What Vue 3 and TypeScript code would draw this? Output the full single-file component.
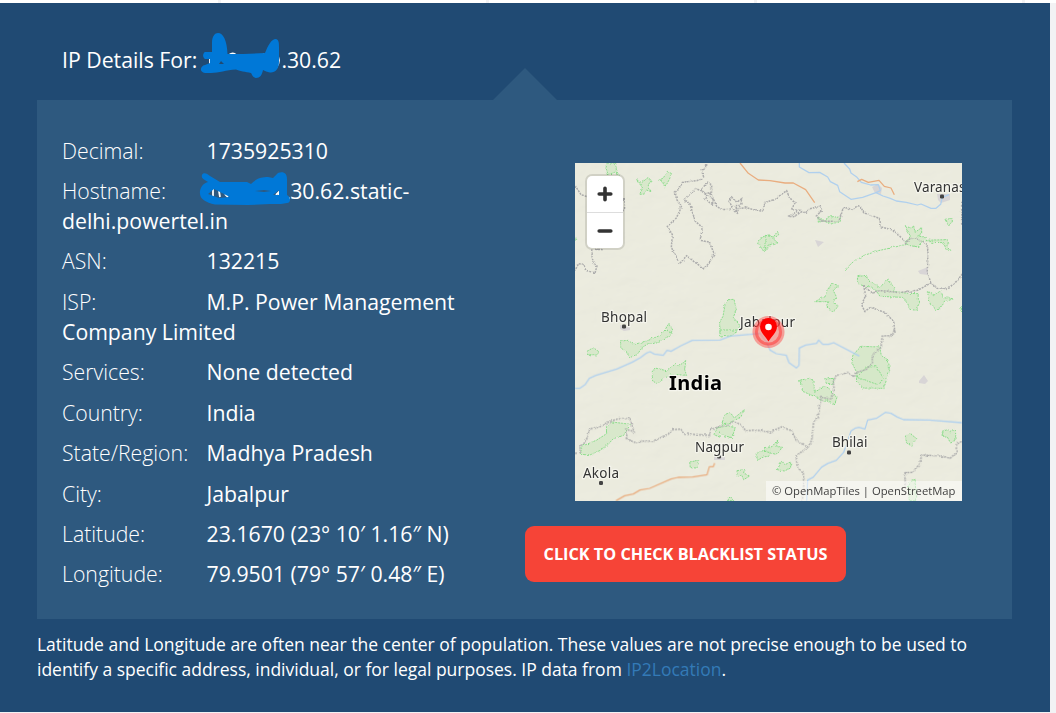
<script setup lang="ts">
interface Detail {
  label: string
  value: string
  masked?: boolean
}

const details: Detail[] = [
  { label: 'Decimal:', value: '1735925310' },
  { label: 'Hostname:', value: '30.62.static-delhi.powertel.in', masked: true },
  { label: 'ASN:', value: '132215' },
  { label: 'ISP:', value: 'M.P. Power Management Company Limited' },
  { label: 'Services:', value: 'None detected' },
  { label: 'Country:', value: 'India' },
  { label: 'State/Region:', value: 'Madhya Pradesh' },
  { label: 'City:', value: 'Jabalpur' },
  { label: 'Latitude:', value: '23.1670 (23° 10′ 1.16″ N)' },
  { label: 'Longitude:', value: '79.9501 (79° 57′ 0.48″ E)' },
]

interface Place {
  name: string
  x: number
  y: number
  w: number
  dotX?: number
  dotY?: number
}

const places: Place[] = [
  { name: 'Varanasi', x: 914, y: 191.5, w: 55, dotX: 942, dotY: 196.5 },
  { name: 'Bhopal', x: 601, y: 321.5, w: 46, dotX: 624, dotY: 326.5 },
  { name: 'Jabalpur', x: 740, y: 326.5, w: 55 },
  { name: 'Nagpur', x: 695, y: 451.5, w: 49, dotX: 719, dotY: 456.5 },
  { name: 'Bhilai', x: 832, y: 447, w: 35.5, dotX: 849, dotY: 452.5 },
  { name: 'Akola', x: 583, y: 478, w: 36, dotX: 601, dotY: 483 },
]
</script>

<template>
  <main class="page">
    <div class="topline"><i></i><i></i><i></i><i></i></div>
    <section class="band">
      <h1 class="title">
        <span>IP Details For:</span>
        <span class="title-gap">
          <svg class="scribble scribble-title" viewBox="200 32 84 48" width="84" height="48">
            <g fill="none" stroke="#fff" stroke-width="1.8">
              <path d="M207 58l3-2v9M229 55q4-3 7 0M258 55v5M262 56q3-4 6 0M276 53q6 7 0 15" />
            </g>
            <path
              fill="#0078d7"
              fill-rule="evenodd"
              d="M205 52H212V43C212 36 215 33 218 33C223 33 227 40 227.5 54L243 54L265 53C268 46 271 39 276 39C279 40 279 43 279 47V62C279 69 275 73 270 72.5C267 72 265 71 263 70C262 75 260 78 256 78C252 77 252 74 251 73C246 72 239 71 236 69.5C226 70 219 73 211 73H205C199 72 200 66 205 65L210 63V59H205C202 57 203 53 205 52ZM219 64L221 61L224 64Z"
            />
          </svg>
        </span>
        <span>.30.62</span>
      </h1>

      <div class="panel">
        <ul class="details">
          <li v-for="item in details" :key="item.label">
            <span class="label">{{ item.label }}</span>
            <span v-if="item.masked" class="host-gap">
              <svg class="scribble scribble-host" viewBox="198 169 94 38" width="94" height="38">
                <path fill="none" stroke="#fff" stroke-width="1.8" d="M213 187v9M219 190l1 6M225 193l3 3M276 194l3-3v4M288.5 197.5h1.5" />
                <path
                  fill="#0078d7"
                  fill-rule="evenodd"
                  d="M202 174C203 171 207 172 210 175L220 181H247L251 183C257 177 262 176 268 176L273 177L278 172C284 170 287 173 287 178V194C291 196 291 202 287 202L281 203H270L248 204L215 203.5C205 201 199 198 200 190C201 185 204 182 208 181C203 178 201 177 202 174ZM208 193L214 188L230 196L219 197ZM255 190L264 189L271 190L264 191ZM273 194L279 189V194Z"
                />
              </svg>
            </span>
            <span class="value">{{ item.value }}</span>
          </li>
        </ul>

        <div class="side">
          <div class="map">
            <svg class="map-canvas" viewBox="575 163 387 338" width="387" height="338">
              <defs>
                <filter id="relief" x="0" y="0" width="100%" height="100%">
                  <feTurbulence type="fractalNoise" baseFrequency="0.018 0.03" numOctaves="4" seed="8" result="n" />
                  <feDiffuseLighting in="n" surfaceScale="3.2" diffuseConstant="1" lighting-color="#ffffff">
                    <feDistantLight azimuth="225" elevation="60" />
                  </feDiffuseLighting>
                </filter>
                <filter id="rough" x="-5%" y="-5%" width="110%" height="110%">
                  <feTurbulence type="fractalNoise" baseFrequency="0.22" numOctaves="2" seed="3" />
                  <feDisplacementMap in="SourceGraphic" scale="3" xChannelSelector="R" yChannelSelector="G" />
                </filter>
              </defs>
              <rect x="575" y="163" width="387" height="338" fill="#ebebdd" />
              <rect x="575" y="163" width="387" height="338" filter="url(#relief)" opacity="0.09" />

              <g class="towns">
                <path d="M872 187l6-3 4 4-1 6-6-1zM937 194h13v6l-9 3-3-3zM918 271l10-4v8l-8-1zM815 240l9 2-6 5zM919 381l5-6 4 6-3 3-6-1zM714 455h11v5h-11zM620 325l10 2v3l-6 1-4-2z" />
              </g>

              <g class="green" filter="url(#rough)">
                <g transform="translate(570 158) scale(.33333)">
                  <path d="M113 15L108 28L114 50L134 43L148 52L139 39L137 15ZM200 65L215 74L235 58L243 72L231 81L244 101L229 96L223 108L209 109L218 90ZM292 40L305 47L298 64L285 88L278 72L266 67L280 60ZM600 231L583 234L562 251L571 266L582 281L600 267ZM475 425L492 424L499 455L490 478L510 503L497 525H450L449 492L459 475L466 435ZM287 512L297 496L308 516L302 525ZM15 234L20 244L15 248Z" />
                </g>
                <g transform="translate(765 158) scale(.33333)">
                  <path d="M159 177L177 187L195 176L226 178V190L201 198L175 189L160 193ZM0 232L25 237L38 220L41 230L25 243L40 255L11 260L0 275ZM540 184L560 182L562 192L550 201ZM421 203L435 210L446 204L450 223L470 209V225L458 234L484 238L460 267L430 262L423 253L436 235ZM481 247L545 245L551 256L546 263L557 277L544 276L536 254L500 253ZM278 356L303 352L314 369L345 389L368 361L389 392L385 400L426 406L459 407L461 443L455 457L434 454L426 430L412 418L345 415L332 396L310 386L287 381L277 370ZM487 401L505 410L529 399L534 419L566 422L540 431L523 453L514 457L497 442L493 426ZM201 377L220 382L205 398L214 416L208 433L219 446L205 460L184 446L189 431L151 431L180 413L186 397ZM590 446L582 453L590 461Z" />
                  <path class="green-line" d="M240 335L264 312L298 292L340 278L386 268L426 259" />
                </g>
                <g transform="translate(570 330) scale(.33333)">
                  <path d="M152 33L175 31L191 44L235 31L269 17L285 0L305 5L300 17L264 35L236 40L217 52L202 73L177 84L170 67L152 53ZM450 0L505 0L486 17L451 21ZM51 64L70 53L88 66L80 75L58 74ZM246 126L255 114L289 122L314 101L324 111L347 91L344 119L350 136L310 133L281 145L265 163L248 153ZM30 374L37 348L79 331L110 311L109 290L126 276L181 283L161 316L130 326L102 356L62 374ZM457 276L466 253L481 248L493 264L523 239L513 260L488 275L456 283ZM448 292L472 288L496 293L486 323L462 317L448 304L451 322L432 314L438 293ZM359 396L386 391L381 414L361 413ZM501 422L523 419L521 429L539 438L521 449L515 435L501 439ZM558 371L600 353V378L580 381L564 390ZM475 502L486 503L491 512H475Z" />
                </g>
                <g transform="translate(765 330) scale(.33333)">
                  <path class="forest" d="M289 49L344 51L349 77L370 90L374 121L356 175L296 174L275 156L272 121L261 98L264 74Z" />
                  <path d="M275 142L305 111L335 110L354 143L342 165ZM104 151L133 145L147 153L148 188L179 167L196 178L203 192L216 202L208 225L187 208L173 214L150 200L113 184ZM179 147L206 145L205 162L184 160ZM421 318L436 311L455 326L440 348L425 339ZM531 304L545 300L555 306L571 297L573 331L555 336L547 321L536 321ZM0 353L21 350L38 330L35 349L53 352L33 373L0 364ZM37 419L49 394L60 404L77 396V414L58 423ZM430 459L451 448L452 512H433Z" />
                </g>
              </g>

              <g class="rivers">
                <g transform="translate(765 158) scale(.33333)">
                  <path d="M103 15V27L132 44L164 43L188 57L196 71L218 82L224 101L258 124L293 118L333 104L354 114L376 121L394 129L424 133L457 141L468 138L498 151L513 151L527 139L532 118L552 110" />
                  <path d="M237 15L254 33L258 45L276 58L289 73L317 81L340 80L346 98L333 104" />
                </g>
                <g transform="translate(570 330) scale(.33333)">
                  <path d="M15 175L29 175L46 163L58 145L78 136L140 117L186 97L211 83L228 70L240 65L253 72L280 76L291 61L303 64L333 47L367 31L450 30L481 18L542 13L570 10L590 37L600 60L619 71L649 76L657 98L679 114L687 106L688 54L707 45L740 40L746 30L758 43L776 43L791 38L868 78" />
                </g>
                <g transform="translate(765 330) scale(.33333)">
                  <path d="M125 512L128 450L145 441L170 411L189 400L214 391L236 367L247 336L258 303L272 294L282 292L300 297L308 270L334 265L361 247L378 250L397 261L416 269L493 270L590 278" />
                </g>
              </g>

              <g class="roads">
                <path transform="translate(570 158) scale(.33333)" d="M510 15L535 46L565 66L600 68L645 75L670 75L707 95L734 134" />
                <path transform="translate(765 158) scale(.33333)" d="M277 71L290 64L310 73L342 67L358 85L378 90L388 110" />
                <path transform="translate(570 330) scale(.33333)" d="M138 512L164 497L190 492L210 480L239 475L303 447L324 442L368 441L411 434L418 410L430 410L434 399" />
              </g>

              <g class="borders" filter="url(#rough)">
                <g transform="translate(570 158) scale(.33333)">
                  <path d="M407 18L406 34L394 35L402 60L380 68L337 73L326 94L316 102L319 123L335 146L319 180L292 205L307 230L304 268L329 317L350 293L371 310L401 332L422 311L432 285L417 252L391 247L397 208L376 190L359 136L341 126L359 109L377 92L394 98L411 71L425 81V102L409 107L392 96L411 113L405 124L428 140L429 121L416 115L422 105L440 145L455 154L479 155L486 145L477 130L485 117L500 133L515 122L512 142L497 143L503 167L491 153L530 149L550 155L579 156L585 134L614 124L650 98L658 118L675 135L664 155L688 157L655 175L671 176L697 160L706 165L718 153L748 145L756 157L739 174L754 189L794 190L808 187L820 149L834 150L849 158L860 144L870 143L881 164L928 181L934 207L971 217L994 239L1007 257L1020 242L1037 240L1070 260L1074 278L1072 340L1082 374L1098 387L1121 393L1142 385L1162 368L1180 343" />
                  <path d="M15 82L33 110L51 116M161 120L164 150L156 162M65 274L69 315L81 324L75 345L47 337L41 319L26 317L15 337M75 274L98 275" />
                </g>
                <g transform="translate(765 158) scale(.33333)">
                  <path d="M499 374L458 397L400 404L365 399L340 398L320 406L295 380L302 412L290 440L299 460L317 448L359 463L386 490L390 525M590 131V204" />
                </g>
                <g transform="translate(570 330) scale(.33333)">
                  <path d="M15 370L30 369L30 350L50 328L59 297L87 291L114 277L142 267L179 265L193 305L167 298L173 329L197 338L223 333L250 333L295 312L309 299L333 297L341 312L384 314L420 316L422 300L446 289L471 285L488 275L514 284L528 303L555 300L580 303L600 307L634 291L666 302L679 333L714 348" />
                </g>
                <g transform="translate(765 330) scale(.33333)">
                  <path d="M388 0L381 17L352 18L348 50L322 76V98L303 119L272 128L266 141L249 127L231 133L213 137L205 157L207 176L197 207L169 202L163 229L160 264L146 274L140 331L130 350L94 377L97 414L114 425L117 460L112 512M590 334L574 343L574 368L555 385L533 378L470 375L464 403L441 427L420 428V470" />
                </g>
              </g>

              <g class="places">
                <g v-for="place in places" :key="place.name">
                  <rect v-if="place.dotX" :x="place.dotX - 2" :y="(place.dotY ?? 0) - 2" width="4" height="4" rx="1.3" fill="#444" />
                  <text :x="place.x" :y="place.y" :textLength="place.w">{{ place.name }}</text>
                </g>
                <text class="nation" x="669" y="390" textLength="53">India</text>
              </g>

              <circle cx="768.5" cy="332" r="16" fill="#ff4040" fill-opacity=".45" />
              <circle cx="768.5" cy="332" r="12" fill="#f3c4bd" fill-opacity=".3" stroke="#ff3030" stroke-opacity=".5" stroke-width="3" />
              <path fill="#f00" d="M768.5 341.5C765 336 760 332 760 326.5A8.5 8.5 0 0 1 777 326.5C777 332 772 336 768.5 341.5Z" />
              <circle cx="768.5" cy="327" r="3.3" fill="#fff" />
            </svg>
            <div class="zoom-control">
              <button type="button" aria-label="Zoom in">
                <svg width="16" height="16" viewBox="0 0 16 16"><path d="M8 2.2v11.6M2.2 8h11.6" /></svg>
              </button>
              <button type="button" aria-label="Zoom out">
                <svg width="16" height="16" viewBox="0 0 16 16"><path d="M2.2 8h11.6" /></svg>
              </button>
            </div>
            <div class="attribution">© OpenMapTiles | OpenStreetMap</div>
          </div>
          <button type="button" class="check">CLICK TO CHECK BLACKLIST STATUS</button>
        </div>
      </div>

      <p class="note">
        Latitude and Longitude are often near the center of population. These values are not precise enough to be used to<br />
        identify a specific address, individual, or for legal purposes. IP data from <a>IP2Location</a>.
      </p>
    </section>
  </main>
</template>

<style>
html,
body {
  margin: 0;
  overflow: hidden;
}
</style>

<style scoped>
.page {
  width: 1056px;
  height: 713px;
  box-sizing: border-box;
  padding-right: 6px;
  background: #f2f2f4;
  font-family: 'Open Sans', 'Noto Sans', sans-serif;
  color: #fff;
  overflow: hidden;
}
.topline {
  display: flex;
  gap: 265px;
  height: 3px;
  padding-left: 218px;
  margin-right: -6px;
  background: #fff;
}
.topline i {
  width: 3px;
  flex: none;
  background: #f2f2f4;
}
.band {
  height: 709px;
  background: #204a73;
}
.title {
  display: flex;
  align-items: flex-start;
  box-sizing: border-box;
  height: 97px;
  margin: 0;
  padding: 42px 0 0 62px;
  font-size: 21.25px;
  font-weight: 400;
  line-height: 30px;
}
.title-gap {
  position: relative;
  width: 84px;
  height: 30px;
}
.scribble {
  position: absolute;
  z-index: 1;
}
.scribble-title {
  left: 3px;
  top: -13px;
}
.panel {
  position: relative;
  display: flex;
  box-sizing: border-box;
  width: 975px;
  height: 519px;
  margin-left: 37px;
  padding: 35px 0 0 25px;
  background: #2e597f;
}
.panel::before {
  content: '';
  position: absolute;
  left: 456px;
  top: -32px;
  border: 32px solid transparent;
  border-top: 0;
  border-bottom-color: #2e597f;
}
.details {
  width: 438px;
  margin: 0.5px 25px 0 0;
  padding: 0;
  list-style: none;
  font-size: 21.25px;
  line-height: 30.2px;
}
.details li {
  margin-bottom: 10.2px;
}
.label {
  display: inline-block;
  width: 144.5px;
  font-weight: 300;
}
.host-gap {
  position: relative;
  display: inline-block;
  width: 83.7px;
  height: 10px;
}
.scribble-host {
  left: -8.5px;
  top: -19px;
}
.side {
  padding-top: 28px;
}
.map {
  position: relative;
  width: 387px;
  height: 338px;
  margin-left: 50px;
  overflow: hidden;
}
.map-canvas {
  display: block;
}
.towns {
  fill: #d8d5d6;
}
.green {
  fill: #d5e8c8;
  fill-opacity: 0.85;
  stroke: #8bdc8b;
  stroke-width: 3;
  stroke-dasharray: 6 3;
}
.green-line {
  fill: none;
}
.rivers {
  fill: none;
  stroke: #b0d0ee;
  stroke-width: 3.8;
  stroke-linejoin: round;
}
.roads {
  fill: none;
  stroke: #e9ad7f;
  stroke-width: 3.8;
  stroke-linejoin: round;
}
.borders {
  fill: none;
  stroke: #adadad;
  stroke-width: 4.5;
  stroke-dasharray: 6 3;
}
.places {
  font-family: 'Noto Sans', sans-serif;
  font-size: 13.5px;
  fill: #333;
  stroke: #f5f5ed;
  stroke-width: 2.5px;
  stroke-linejoin: round;
  paint-order: stroke;
}
.places rect {
  stroke: none;
}
.nation {
  font-size: 20px;
  font-weight: 700;
  fill: #000;
}
.zoom-control {
  position: absolute;
  left: 12px;
  top: 13px;
  width: 36px;
  border-radius: 5px;
  background: #fff;
  box-shadow: 0 0 0 2px rgba(0, 0, 0, 0.11);
}
.zoom-control button {
  display: flex;
  align-items: center;
  justify-content: center;
  width: 36px;
  height: 36px;
  padding: 0;
  border: 0;
  background: none;
}
.zoom-control button + button {
  border-top: 1px solid #ddd;
}
.zoom-control path {
  fill: none;
  stroke: #333;
  stroke-width: 3.6;
  stroke-linecap: round;
}
.attribution {
  position: absolute;
  right: 0;
  bottom: 0;
  box-sizing: border-box;
  width: 196px;
  height: 20px;
  padding-left: 6px;
  background: rgba(255, 255, 255, 0.5);
  color: #404040;
  font-size: 11.25px;
  line-height: 20px;
  white-space: nowrap;
}
.check {
  display: block;
  width: 321px;
  height: 56px;
  margin-top: 25px;
  padding: 0;
  border: 0;
  border-radius: 9px;
  background: #f64437;
  color: #fff;
  font: 700 16.25px/56px 'Open Sans', sans-serif;
  white-space: nowrap;
}
.note {
  margin: 0;
  padding: 13px 0 0 37px;
  font-size: 17.5px;
  line-height: 25px;
  letter-spacing: -0.01px;
  white-space: nowrap;
}
.note a {
  color: #337ab7;
}
</style>
